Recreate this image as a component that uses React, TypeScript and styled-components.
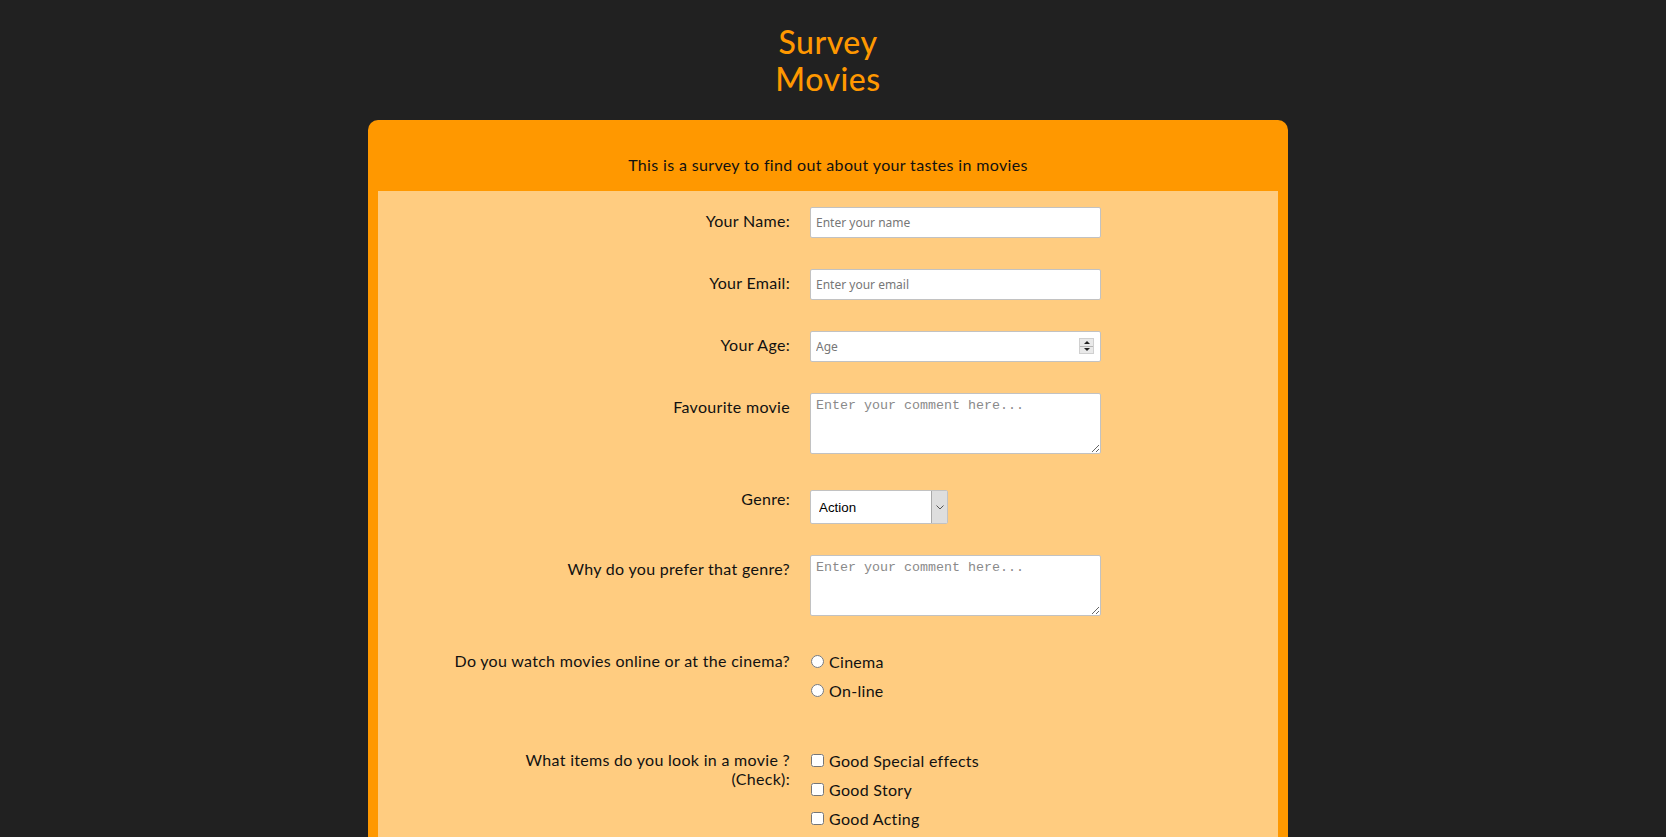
import React from "react";
import styled, { createGlobalStyle } from "styled-components";

const GlobalStyle = createGlobalStyle`
  html, body {
    margin: 0;
    padding: 0;
    background: #212121;
  }
  body {
    font-family: Lato, "Open Sans", sans-serif;
    color: #111;
  }
  * { box-sizing: border-box; }
`;

const Page = styled.main`
  padding: 0 10px 60px 0;
`;

const Title = styled.h1`
  margin: 23px auto 23px;
  width: 130px;
  text-align: center;
  font-family: Lato, "Open Sans", sans-serif;
  font-size: 32px;
  line-height: 37px;
  font-weight: 500;
  letter-spacing: 0.5px;
  color: #ff9800;
`;

const Card = styled.section`
  width: 920px;
  margin: 0 auto;
  background: #ff9800;
  border-radius: 10px 10px 0 0;
  padding: 0 10px 10px;
`;

const Intro = styled.p`
  margin: 0;
  padding: 35px 0 16px;
  text-align: center;
  font-size: 16px;
  line-height: 20px;
  letter-spacing: 0.35px;
`;

const FormArea = styled.form`
  background: #ffcc80;
  padding: 16px 0 80px;
  display: flex;
  flex-direction: column;
  gap: 31px;
`;

const Row = styled.div<{ $extraTop?: number }>`
  display: grid;
  grid-template-columns: 412px 1fr;
  column-gap: 20px;
  align-items: start;
  margin-top: ${(p) => p.$extraTop ?? 0}px;
`;

const Label = styled.label`
  display: block;
  text-align: right;
  padding-top: 4px;
  font-size: 16px;
  line-height: 19px;
  letter-spacing: 0.3px;
`;

const fieldBase = `
  display: block;
  width: 291px;
  background: #fff;
  border: 1px solid #c2c2c2;
  border-radius: 2px;
  outline: none;
  margin: 0;
`;

const TextInput = styled.input`
  ${fieldBase}
  height: 31px;
  padding: 0 5px;
  font-family: "Noto Sans", "Open Sans", sans-serif;
  font-size: 12px;
  color: #222;
  &::placeholder { color: #777; }
  &::-webkit-inner-spin-button,
  &::-webkit-outer-spin-button {
    -webkit-appearance: none;
    margin: 0;
  }
  -moz-appearance: textfield;
`;

const TextArea = styled.textarea`
  ${fieldBase}
  height: 61px;
  padding: 4px 5px;
  font-family: "Liberation Mono", monospace;
  font-size: 13.33px;
  line-height: 15px;
  resize: both;
  &::placeholder { color: #8a8a8a; }
`;

const FieldWrap = styled.div`
  position: relative;
  width: 291px;
`;

const Spinner = styled.span`
  position: absolute;
  right: 7px;
  top: 7px;
  width: 15px;
  height: 16px;
  background: #e9e9e9;
  border: 1px solid #d0d0d0;
  display: flex;
  flex-direction: column;
  pointer-events: none;
`;

const SpinHalf = styled.span<{ $down?: boolean }>`
  flex: 1;
  display: flex;
  align-items: center;
  justify-content: center;
  border-top: ${(p) => (p.$down ? "1px solid #b5b5b5" : "none")};
  &::before {
    content: "";
    width: 0;
    height: 0;
    border-left: 3px solid transparent;
    border-right: 3px solid transparent;
    ${(p) =>
      p.$down ? "border-top: 3px solid #222;" : "border-bottom: 3px solid #222;"}
  }
`;

const SelectWrap = styled.div`
  position: relative;
  width: 138px;
  height: 34px;
  margin-top: 5px;
`;

const Select = styled.select`
  appearance: none;
  -webkit-appearance: none;
  width: 100%;
  height: 100%;
  background: #fff;
  border: 1px solid #c2c2c2;
  border-radius: 2px;
  padding: 0 20px 0 8px;
  font-family: "Liberation Sans", Arial, sans-serif;
  font-size: 13.33px;
  color: #000;
  outline: none;
`;

const SelectArrow = styled.span`
  position: absolute;
  right: 1px;
  top: 1px;
  bottom: 1px;
  width: 16px;
  background: #dedede;
  border-left: 1px solid #a9a9a9;
  display: flex;
  align-items: center;
  justify-content: center;
  pointer-events: none;
`;

const Options = styled.div<{ $padTop?: number }>`
  display: flex;
  flex-direction: column;
  padding-top: ${(p) => p.$padTop ?? 0}px;
`;

const Option = styled.label`
  display: flex;
  align-items: center;
  height: 29px;
  font-size: 16px;
  letter-spacing: 0.3px;
  cursor: pointer;
`;

const Choice = styled.input`
  width: 13px;
  height: 13px;
  margin: 0 5px 0 1px;
  flex: none;
`;

const Chevron = () => (
  <svg width="8" height="5" viewBox="0 0 8 5" fill="none">
    <path d="M0.5 0.5 L4 4 L7.5 0.5" stroke="#555" strokeWidth="1" />
  </svg>
);

export default function App() {
  return (
    <>
      <GlobalStyle />
      <Page>
        <Title>Survey Movies</Title>
        <Card>
          <Intro>This is a survey to find out about your tastes in movies</Intro>
          <FormArea onSubmit={(e) => e.preventDefault()}>
            <Row>
              <Label htmlFor="name">Your Name:</Label>
              <TextInput id="name" type="text" placeholder="Enter your name" />
            </Row>
            <Row>
              <Label htmlFor="email">Your Email:</Label>
              <TextInput id="email" type="email" placeholder="Enter your email" />
            </Row>
            <Row>
              <Label htmlFor="age">Your Age:</Label>
              <FieldWrap>
                <TextInput id="age" type="number" placeholder="Age" />
                <Spinner>
                  <SpinHalf />
                  <SpinHalf $down />
                </Spinner>
              </FieldWrap>
            </Row>
            <Row>
              <Label htmlFor="fav">Favourite movie</Label>
              <TextArea id="fav" placeholder="Enter your comment here..." />
            </Row>
            <Row>
              <Label htmlFor="genre">Genre:</Label>
              <SelectWrap>
                <Select id="genre" defaultValue="action">
                  <option value="action">Action</option>
                  <option value="comedy">Comedy</option>
                  <option value="drama">Drama</option>
                  <option value="horror">Horror</option>
                  <option value="scifi">Sci-Fi</option>
                </Select>
                <SelectArrow>
                  <Chevron />
                </SelectArrow>
              </SelectWrap>
            </Row>
            <Row>
              <Label htmlFor="why">Why do you prefer that genre?</Label>
              <TextArea id="why" placeholder="Enter your comment here..." />
            </Row>
            <Row>
              <Label>Do you watch movies online or at the cinema?</Label>
              <Options>
                <Option>
                  <Choice type="radio" name="where" value="cinema" />
                  Cinema
                </Option>
                <Option>
                  <Choice type="radio" name="where" value="online" />
                  On-line
                </Option>
              </Options>
            </Row>
            <Row $extraTop={10}>
              <Label>
                What items do you look in a movie ?<br />
                (Check):
              </Label>
              <Options>
                <Option>
                  <Choice type="checkbox" value="effects" />
                  Good Special effects
                </Option>
                <Option>
                  <Choice type="checkbox" value="story" />
                  Good Story
                </Option>
                <Option>
                  <Choice type="checkbox" value="acting" />
                  Good Acting
                </Option>
              </Options>
            </Row>
          </FormArea>
        </Card>
      </Page>
    </>
  );
}
